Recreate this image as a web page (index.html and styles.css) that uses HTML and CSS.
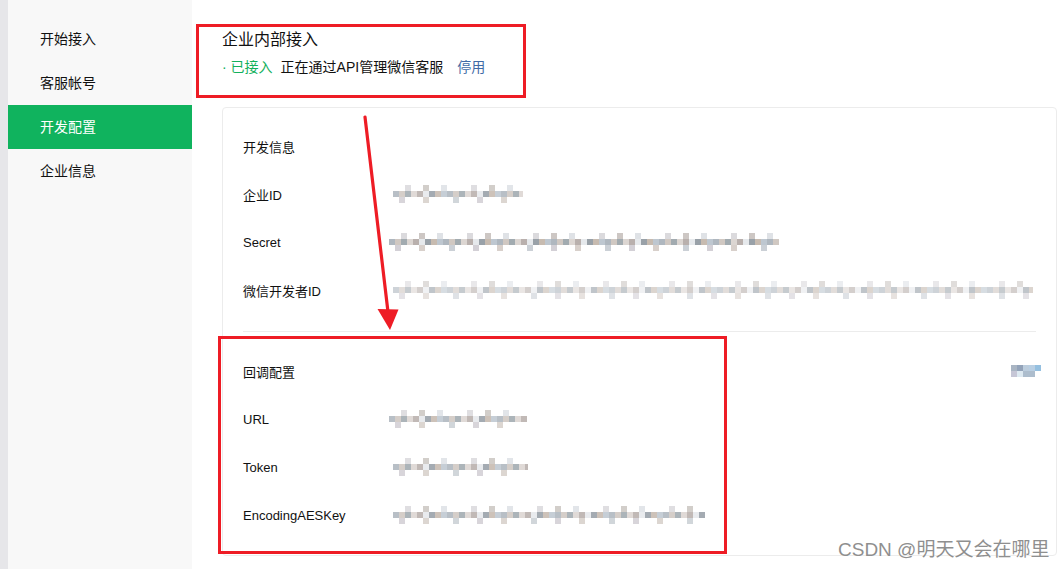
FILE: index.html
```html
<!DOCTYPE html>
<html lang="zh-CN">
<head>
<meta charset="utf-8">
<title>开发配置</title>
<link rel="stylesheet" href="styles.css">
</head>
<body>
<div class="page">
  <div class="strip"></div>
  <nav class="sidebar">
    <div class="nav-item">开始接入</div>
    <div class="nav-item">客服帐号</div>
    <div class="nav-item active">开发配置</div>
    <div class="nav-item">企业信息</div>
  </nav>
  <main class="main">
    <section class="head">
      <div class="head-title">企业内部接入</div>
      <div class="head-status">
        <span class="ok">· 已接入</span>
        <span class="desc">正在通过API管理微信客服</span>
        <span class="link">停用</span>
      </div>
    </section>
    <section class="card">
      <div class="group">
        <div class="row"><div class="label">开发信息</div></div>
        <div class="row"><div class="label">企业ID</div><div class="mosaic w130 off4"></div></div>
        <div class="row"><div class="label">Secret</div><div class="mosaic w390 dark"></div></div>
        <div class="row"><div class="label">微信开发者ID</div><div class="mosaic w640 off4 light"></div></div>
      </div>
      <div class="divider"></div>
      <div class="group">
        <div class="row"><div class="label">回调配置</div><div class="edit"></div></div>
        <div class="row"><div class="label">URL</div><div class="mosaic w138"></div></div>
        <div class="row"><div class="label">Token</div><div class="mosaic w155 off4"></div></div>
        <div class="row"><div class="label">EncodingAESKey</div><div class="mosaic w312 off4"></div></div>
      </div>
    </section>
  </main>
</div>

<div class="mark mark-head"></div>
<div class="mark mark-callback"></div>
<svg class="arrow" width="1064" height="569" viewBox="0 0 1064 569">
  <line x1="365" y1="117" x2="388" y2="312" stroke="#ee1c25" stroke-width="3.2" stroke-linecap="round"/>
  <polygon points="377.5,309 398.5,309.5 390,330" fill="#ee1c25"/>
</svg>
<div class="watermark">CSDN @明天又会在哪里</div>
</body>
</html>
```

FILE: styles.css
```css
* { box-sizing: border-box; }

html, body {
  margin: 0;
  padding: 0;
  background: #ffffff;
}

body {
  width: 1064px;
  height: 569px;
  overflow: hidden;
  position: relative;
  font-family: "Liberation Sans", "Noto Sans CJK SC", Arial, sans-serif;
  color: #1a1a1a;
}

.page {
  display: flex;
  height: 569px;
}

.strip {
  width: 8px;
  flex: none;
  background: #e6e6e9;
}

.sidebar {
  width: 184px;
  flex: none;
  background: #f8f8f8;
  padding-top: 17px;
}

.nav-item {
  height: 44px;
  line-height: 44px;
  padding-left: 32px;
  font-size: 14px;
  color: #111;
}

.nav-item.active {
  background: #10b35e;
  color: #ffffff;
}

.main {
  flex: 1;
  padding: 28px 7px 0 30px;
}

.head-title {
  font-size: 16px;
  line-height: 24px;
  color: #111;
}

.head-status {
  margin-top: 3px;
  line-height: 24px;
  font-size: 14px;
  display: flex;
  align-items: center;
}

.ok { color: #13b05c; }
.desc { margin-left: 8px; color: #111; }
.link { margin-left: 14px; color: #3f6aa6; }

.card {
  margin-top: 28px;
  border: 1px solid #ececec;
  border-radius: 4px;
  height: 449px;
  padding: 14px 20px 16px 20px;
}

.row {
  height: 48px;
  display: flex;
  align-items: center;
  font-size: 13px;
}

.label {
  width: 146px;
  flex: none;
  color: #111;
}

.divider {
  height: 1px;
  background: #ececec;
  margin: 17px 0 15px 0;
}

.mosaic {
  height: 18px;
  flex: none;
  background-image:
    repeating-linear-gradient(90deg, transparent 0 12px, #d8d6da 12px 18px, transparent 18px 30px, #c8c2be 30px 36px, transparent 36px 48px, #dcdfe4 48px 54px, transparent 54px 66px),
    repeating-linear-gradient(90deg, #a7b0b9 0 6px, #cbc3bc 6px 12px, #98a2a8 12px 18px, #d9d2ce 18px 24px, #b2a8a5 24px 30px, #e4e7eb 30px 36px, #8e979f 36px 42px, #c1b4a8 42px 48px, #b8c2cc 48px 54px),
    repeating-linear-gradient(90deg, transparent 0 6px, #cfcbd2 6px 12px, transparent 12px 30px, #d4ccc6 30px 36px, transparent 36px 60px, #c6ccd2 60px 66px, transparent 66px 78px);
  background-size: 100% 6px, 100% 6px, 100% 6px;
  background-position: 0 0, 0 6px, 0 12px;
  background-repeat: no-repeat;
  opacity: 0.8;
}

.mosaic.dark { opacity: 0.9; }
.mosaic.light { opacity: 0.55; }
.off4 { margin-left: 4px; }
.w130 { width: 130px; }
.w138 { width: 138px; }
.w155 { width: 135px; }
.w312 { width: 312px; }
.w390 { width: 390px; }
.w640 { width: 640px; }

.edit {
  margin-left: auto;
  margin-right: -5px;
  width: 30px;
  height: 12px;
  background:
    linear-gradient(90deg, #a9b5c3 0 6px, #93a3b9 6px 12px, #bccddd 12px 18px, #b9cfe3 18px 24px, #95c0e0 24px 30px) 0 0 / 30px 6px no-repeat,
    linear-gradient(90deg, #c6c6d6 0 6px, #dde9f1 6px 12px, #adbdcd 12px 24px, transparent 24px 30px) 0 6px / 30px 6px no-repeat;
}

.mark {
  position: absolute;
  border: 3px solid #ee1c25;
  pointer-events: none;
}

.mark-head {
  left: 196px;
  top: 24px;
  width: 330px;
  height: 74px;
}

.mark-callback {
  left: 218px;
  top: 336px;
  width: 509px;
  height: 218px;
}

.arrow {
  position: absolute;
  left: 0;
  top: 0;
  pointer-events: none;
}

.watermark {
  position: absolute;
  left: 838px;
  top: 538px;
  font-family: "Liberation Sans", "Noto Sans CJK SC", sans-serif;
  font-size: 19px;
  line-height: 24px;
  color: #8f8f8f;
  text-shadow: 0 0 1px #ffffff;
  white-space: nowrap;
}
```
